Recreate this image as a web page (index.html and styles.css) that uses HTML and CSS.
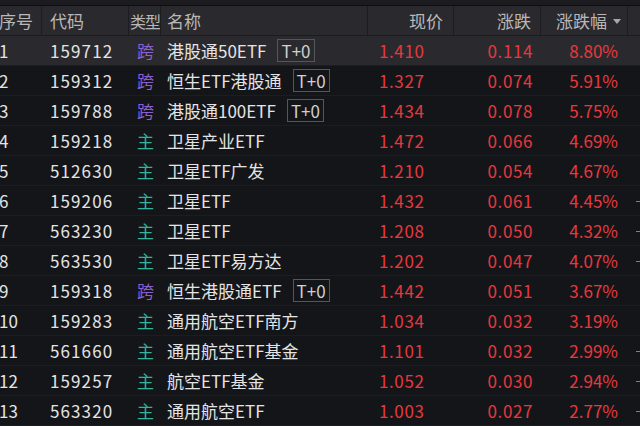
FILE: index.html
```html
<!DOCTYPE html>
<html lang="zh">
<head>
<meta charset="utf-8">
<link rel="stylesheet" href="styles.css">
</head>
<body>
<div class="topbar"></div>
<div class="table">
  <div class="row head">
    <div class="c idx">序号</div>
    <div class="c code">代码</div>
    <div class="c type">类型</div>
    <div class="c name">名称</div>
    <div class="c price hr">现价</div>
    <div class="c chg hr">涨跌</div>
    <div class="c pct hr">涨跌幅<span class="arrow"></span></div>
    <div class="c extra"></div>
  </div>
  <div class="row sel">
    <div class="c idx">1</div><div class="c code">159712</div><div class="c type kua">跨</div>
    <div class="c name">港股通50ETF<span class="tag">T+0</span></div>
    <div class="c price red">1.410</div><div class="c chg red">0.114</div><div class="c pct red">8.80%</div><div class="c extra"></div>
  </div>
  <div class="row">
    <div class="c idx">2</div><div class="c code">159312</div><div class="c type kua">跨</div>
    <div class="c name">恒生ETF港股通<span class="tag">T+0</span></div>
    <div class="c price red">1.327</div><div class="c chg red">0.074</div><div class="c pct red">5.91%</div><div class="c extra"></div>
  </div>
  <div class="row">
    <div class="c idx">3</div><div class="c code">159788</div><div class="c type kua">跨</div>
    <div class="c name">港股通100ETF<span class="tag">T+0</span></div>
    <div class="c price red">1.434</div><div class="c chg red">0.078</div><div class="c pct red">5.75%</div><div class="c extra"></div>
  </div>
  <div class="row">
    <div class="c idx">4</div><div class="c code">159218</div><div class="c type zhu">主</div>
    <div class="c name">卫星产业ETF</div>
    <div class="c price red">1.472</div><div class="c chg red">0.066</div><div class="c pct red">4.69%</div><div class="c extra"></div>
  </div>
  <div class="row">
    <div class="c idx">5</div><div class="c code">512630</div><div class="c type zhu">主</div>
    <div class="c name">卫星ETF广发</div>
    <div class="c price red">1.210</div><div class="c chg red">0.054</div><div class="c pct red">4.67%</div><div class="c extra"></div>
  </div>
  <div class="row">
    <div class="c idx">6</div><div class="c code">159206</div><div class="c type zhu">主</div>
    <div class="c name">卫星ETF</div>
    <div class="c price red">1.432</div><div class="c chg red">0.061</div><div class="c pct red">4.45%</div><div class="c extra"><span class="dash"></span></div>
  </div>
  <div class="row">
    <div class="c idx">7</div><div class="c code">563230</div><div class="c type zhu">主</div>
    <div class="c name">卫星ETF</div>
    <div class="c price red">1.208</div><div class="c chg red">0.050</div><div class="c pct red">4.32%</div><div class="c extra"><span class="dash"></span></div>
  </div>
  <div class="row">
    <div class="c idx">8</div><div class="c code">563530</div><div class="c type zhu">主</div>
    <div class="c name">卫星ETF易方达</div>
    <div class="c price red">1.202</div><div class="c chg red">0.047</div><div class="c pct red">4.07%</div><div class="c extra"><span class="dash"></span></div>
  </div>
  <div class="row">
    <div class="c idx">9</div><div class="c code">159318</div><div class="c type kua">跨</div>
    <div class="c name">恒生港股通ETF<span class="tag">T+0</span></div>
    <div class="c price red">1.442</div><div class="c chg red">0.051</div><div class="c pct red">3.67%</div><div class="c extra"></div>
  </div>
  <div class="row">
    <div class="c idx">10</div><div class="c code">159283</div><div class="c type zhu">主</div>
    <div class="c name">通用航空ETF南方</div>
    <div class="c price red">1.034</div><div class="c chg red">0.032</div><div class="c pct red">3.19%</div><div class="c extra"></div>
  </div>
  <div class="row">
    <div class="c idx">11</div><div class="c code">561660</div><div class="c type zhu">主</div>
    <div class="c name">通用航空ETF基金</div>
    <div class="c price red">1.101</div><div class="c chg red">0.032</div><div class="c pct red">2.99%</div><div class="c extra"><span class="dash"></span></div>
  </div>
  <div class="row">
    <div class="c idx">12</div><div class="c code">159257</div><div class="c type zhu">主</div>
    <div class="c name">航空ETF基金</div>
    <div class="c price red">1.052</div><div class="c chg red">0.030</div><div class="c pct red">2.94%</div><div class="c extra"><span class="dash"></span></div>
  </div>
  <div class="row">
    <div class="c idx">13</div><div class="c code">563320</div><div class="c type zhu">主</div>
    <div class="c name">通用航空ETF</div>
    <div class="c price red">1.003</div><div class="c chg red">0.027</div><div class="c pct red">2.77%</div><div class="c extra"><span class="dash"></span></div>
  </div>
</div>
</body>
</html>
```
FILE: styles.css
```css
html, body {
  margin: 0;
  padding: 0;
  background: #141519;
  overflow: hidden;
}
body {
  width: 640px;
  height: 426px;
  font-family: "Noto Sans CJK SC", "Noto Sans", sans-serif;
  font-size: 17px;
  color: #e4e4e4;
}
.topbar {
  height: 5px;
  background: #1c1c20;
  border-bottom: 1px solid #0e0e10;
}
.table {
  display: flex;
  flex-direction: column;
}
.row {
  display: flex;
  height: 30px;
  align-items: stretch;
  box-sizing: border-box;
  border-bottom: 1px solid #1c1d21;
  white-space: nowrap;
}
.row.head {
  background: #2a2a2e;
  color: #b8b8b8;
  border-bottom: 1px solid #1c1c20;
}
.row.sel {
  background: #2a2a2e;
}
.c {
  display: flex;
  align-items: center;
  box-sizing: border-box;
  overflow: hidden;
  flex: none;
}
.head .c {
  border-right: 1px solid #1d1d21;
}
.idx { width: 42px; padding-left: 0; text-indent: -1px; }
.code { width: 87px; padding-left: 8px; }
.row:not(.head) .code { letter-spacing: 1.1px; }
.type { width: 32px; padding-left: 1px; }
.head .type { font-size: 16px; letter-spacing: -1px; }
.row:not(.head) .type { padding-left: 8px; }
.name { width: 207px; padding-left: 6px; }
.price { width: 86px; padding-left: 11px; }
.chg { width: 87px; justify-content: flex-end; padding-right: 9px; }
.pct { width: 87px; justify-content: flex-end; padding-right: 10px; }
.row:not(.head) .price, .row:not(.head) .chg { letter-spacing: 0.6px; }
.row:not(.head) .chg { padding-right: 8px; }
.head .price { justify-content: flex-end; padding-right: 10px; }
.head .pct { padding-right: 6px; }
.extra { width: 12px; padding-left: 8px; }
.head .extra { border-right: none; }
.dash {
  display: block;
  width: 4px;
  height: 1px;
  margin-top: 2px;
  background: #2fa88f;
}
.arrow {
  display: inline-block;
  width: 0;
  height: 0;
  border-left: 4.5px solid transparent;
  border-right: 4.5px solid transparent;
  border-top: 5px solid #a8a8a8;
  margin-left: 6px;
  margin-top: 1px;
}
.kua { color: #8e5fcf; }
.zhu { color: #33b39c; }
.red { color: #e7383e; }
.tag {
  display: inline-flex;
  align-items: center;
  height: 23px;
  box-sizing: border-box;
  border: 1px solid #55565a;
  padding: 0 3px;
  margin-left: 11px;
  color: #d0d0d0;
  font-size: 17px;
}
```
